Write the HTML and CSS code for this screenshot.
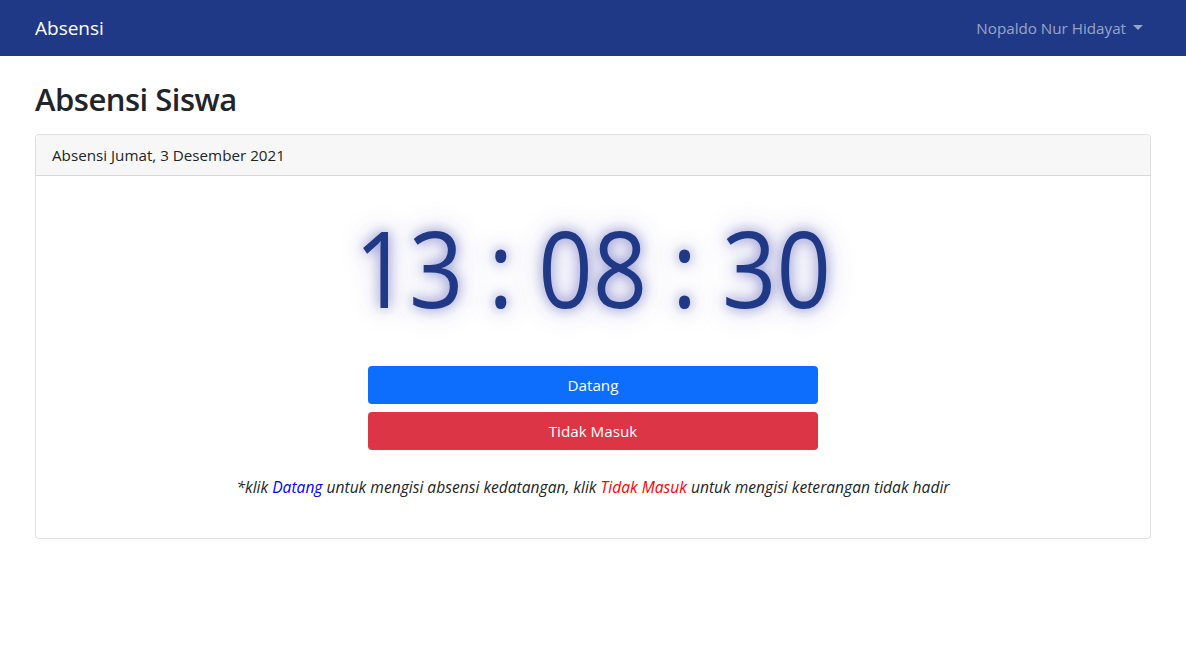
FILE: index.html
```html
<!DOCTYPE html>
<html lang="id">
<head>
<meta charset="utf-8">
<title>Absensi</title>
<link rel="stylesheet" href="styles.css">
</head>
<body>
<nav class="navbar">
  <a class="brand" href="#">Absensi</a>
  <a class="user" href="#">Nopaldo Nur Hidayat<span class="caret"></span></a>
</nav>
<main class="content">
  <h2 class="title">Absensi Siswa</h2>
  <section class="card">
    <div class="card-header">Absensi Jumat, 3 Desember 2021</div>
    <div class="card-body">
      <div class="clock">13 : 08 : 30</div>
      <div class="actions">
        <button class="btn btn-primary">Datang</button>
        <button class="btn btn-danger">Tidak Masuk</button>
      </div>
      <p class="note">*klik <span class="blue">Datang</span> untuk mengisi absensi kedatangan, klik <span class="red">Tidak Masuk</span> untuk mengisi keterangan tidak hadir</p>
    </div>
  </section>
</main>
</body>
</html>
```
FILE: styles.css
```css
* { box-sizing: border-box; }
html, body { margin: 0; padding: 0; }
body {
  font-family: "Open Sans", "Noto Sans", sans-serif;
  font-size: 15.2px;
  line-height: 1.5;
  color: #212529;
  background: #fff;
}
.navbar {
  height: 56px;
  background: #1f3986;
  display: flex;
  align-items: center;
  justify-content: space-between;
  padding: 0 43px 0 35px;
}
.brand {
  color: #fff;
  font-size: 19px;
  text-decoration: none;
}
.user {
  color: rgba(255,255,255,.55);
  text-decoration: none;
  font-size: 15.2px;
  display: flex;
  align-items: center;
}
.caret {
  display: inline-block;
  margin-left: 7px;
  width: 0; height: 0;
  border-left: 5px solid transparent;
  border-right: 5px solid transparent;
  border-top: 5px solid rgba(255,255,255,.55);
  margin-top: -1px;
}
.content {
  padding: 0 35px;
}
.title {
  margin: 25px 0 16px;
  font-size: 31px;
  font-weight: 600;
  line-height: 1.2;
  letter-spacing: -0.5px;
}
.card {
  border: 1px solid rgba(0,0,0,.125);
  border-radius: 4px;
  overflow: hidden;
}
.card-header {
  background: #f7f7f7;
  border-bottom: 1px solid rgba(0,0,0,.125);
  padding: 0 16px;
  height: 41px;
  display: flex;
  align-items: center;
}
.card-body {
  padding: 16px 16px 24px;
  display: flex;
  flex-direction: column;
  align-items: center;
}
.clock {
  font-size: 106px;
  line-height: 1.2;
  color: #1f3986;
  text-shadow: 0 0 14px rgba(40,40,160,.55), 0 0 32px rgba(70,70,190,.3);
  margin: 12px 0 35px;
  transform: scaleX(0.9);
  white-space: nowrap;
}
.actions {
  width: 450px;
  display: flex;
  flex-direction: column;
  gap: 8px;
}
.btn {
  height: 38px;
  border: 0;
  border-radius: 4px;
  color: #fff;
  font-family: inherit;
  font-size: 15.2px;
}
.btn-primary { background: #0d6efd; }
.btn-danger { background: #dc3545; }
.note {
  font-style: italic;
  font-size: 15.6px;
  line-height: 24px;
  margin: 25px 0 15px;
}
.blue { color: #0000ff; }
.red { color: #ff0000; }
```
